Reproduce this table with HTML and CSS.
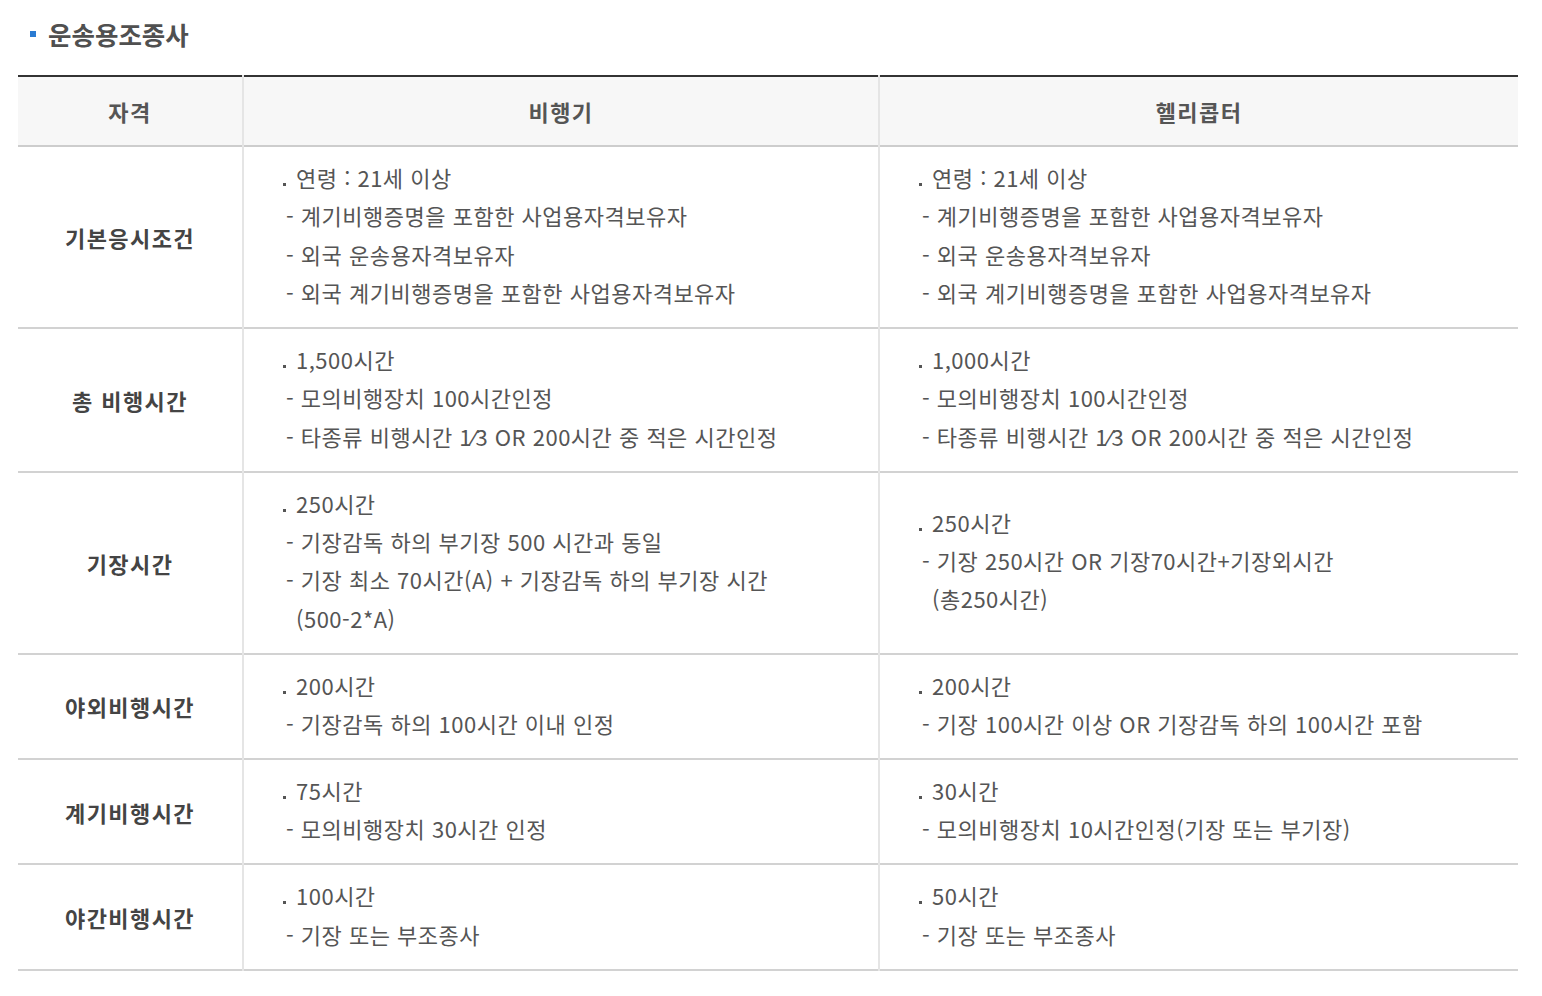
FILE: index.html
```html
<!DOCTYPE html>
<html lang="ko">
<head>
<meta charset="utf-8">
<title>운송용조종사</title>
<link rel="stylesheet" href="styles.css">
</head>
<body>
<div class="page">
  <h2 class="title"><span class="sq"></span>운송용조종사</h2>
  <div class="tbl">
    <div class="th">자격</div>
    <div class="th">비행기</div>
    <div class="th">헬리콥터</div>

    <div class="rh">기본응시조건</div>
    <div class="cell">
      <p class="item"><span class="dot"></span>연령 : 21세 이상</p>
      <p class="sub">- 계기비행증명을 포함한 사업용자격보유자</p>
      <p class="sub">- 외국 운송용자격보유자</p>
      <p class="sub">- 외국 계기비행증명을 포함한 사업용자격보유자</p>
    </div>
    <div class="cell">
      <p class="item"><span class="dot"></span>연령 : 21세 이상</p>
      <p class="sub">- 계기비행증명을 포함한 사업용자격보유자</p>
      <p class="sub">- 외국 운송용자격보유자</p>
      <p class="sub">- 외국 계기비행증명을 포함한 사업용자격보유자</p>
    </div>

    <div class="rh">총 비행시간</div>
    <div class="cell">
      <p class="item"><span class="dot"></span>1,500시간</p>
      <p class="sub">- 모의비행장치 100시간인정</p>
      <p class="sub">- 타종류 비행시간 1⁄3 OR 200시간 중 적은 시간인정</p>
    </div>
    <div class="cell">
      <p class="item"><span class="dot"></span>1,000시간</p>
      <p class="sub">- 모의비행장치 100시간인정</p>
      <p class="sub">- 타종류 비행시간 1⁄3 OR 200시간 중 적은 시간인정</p>
    </div>

    <div class="rh">기장시간</div>
    <div class="cell">
      <p class="item"><span class="dot"></span>250시간</p>
      <p class="sub">- 기장감독 하의 부기장 500 시간과 동일</p>
      <p class="sub">- 기장 최소 70시간(A) + 기장감독 하의 부기장 시간</p>
      <p class="cont">(500-2*A)</p>
    </div>
    <div class="cell">
      <p class="item"><span class="dot"></span>250시간</p>
      <p class="sub">- 기장 250시간 OR 기장70시간+기장외시간</p>
      <p class="cont">(총250시간)</p>
    </div>

    <div class="rh">야외비행시간</div>
    <div class="cell">
      <p class="item"><span class="dot"></span>200시간</p>
      <p class="sub">- 기장감독 하의 100시간 이내 인정</p>
    </div>
    <div class="cell">
      <p class="item"><span class="dot"></span>200시간</p>
      <p class="sub">- 기장 100시간 이상 OR 기장감독 하의 100시간 포함</p>
    </div>

    <div class="rh">계기비행시간</div>
    <div class="cell">
      <p class="item"><span class="dot"></span>75시간</p>
      <p class="sub">- 모의비행장치 30시간 인정</p>
    </div>
    <div class="cell">
      <p class="item"><span class="dot"></span>30시간</p>
      <p class="sub">- 모의비행장치 10시간인정(기장 또는 부기장)</p>
    </div>

    <div class="rh">야간비행시간</div>
    <div class="cell">
      <p class="item"><span class="dot"></span>100시간</p>
      <p class="sub">- 기장 또는 부조종사</p>
    </div>
    <div class="cell">
      <p class="item"><span class="dot"></span>50시간</p>
      <p class="sub">- 기장 또는 부조종사</p>
    </div>
  </div>
</div>
</body>
</html>
```
FILE: styles.css
```css
html, body {
  margin: 0;
  padding: 0;
  background: #fff;
}
body {
  font-family: "Noto Sans CJK KR", "Noto Sans", sans-serif;
  color: #555;
}
.page {
  padding: 17px 0 0 18px;
}
.title {
  margin: 0 0 24px 0;
  display: flex;
  align-items: center;
  font-size: 25.5px;
  line-height: 34px;
  font-weight: 700;
  color: #505050;
}
.sq {
  display: inline-block;
  width: 6px;
  height: 6px;
  background: #2b7bd2;
  margin: 0 12px 0 12px;
}
.tbl {
  display: grid;
  grid-template-columns: 224px 634px 638px;
  column-gap: 2px;
  width: 1500px;
  background: #e5e5e5;
}
.th {
  background: #f7f7f7;
  border-top: 2px solid #333;
  border-bottom: 2px solid #cdcdcd;
  height: 68px;
  display: flex;
  align-items: center;
  justify-content: center;
  font-size: 22px;
  letter-spacing: 1.4px;
  font-weight: 700;
  color: #555;
}
.rh,
.cell {
  background: #fff;
  border-bottom: 2px solid #d2d2d2;
}
.rh {
  display: flex;
  align-items: center;
  justify-content: center;
  font-size: 22px;
  letter-spacing: 1.4px;
  font-weight: 700;
  color: #444;
}
.cell {
  display: flex;
  flex-direction: column;
  justify-content: center;
  padding: 11px 0 15.8px 39px;
  font-size: 22px;
  letter-spacing: 0.5px;
  line-height: 38.3px;
}
.cell p {
  margin: 0;
  white-space: nowrap;
}
.dot {
  display: inline-block;
  width: 3px;
  height: 3px;
  background: #555;
  margin-right: 10px;
  vertical-align: 1px;
}
.sub {
  padding-left: 3px;
}
.cont {
  padding-left: 13px;
}
```
